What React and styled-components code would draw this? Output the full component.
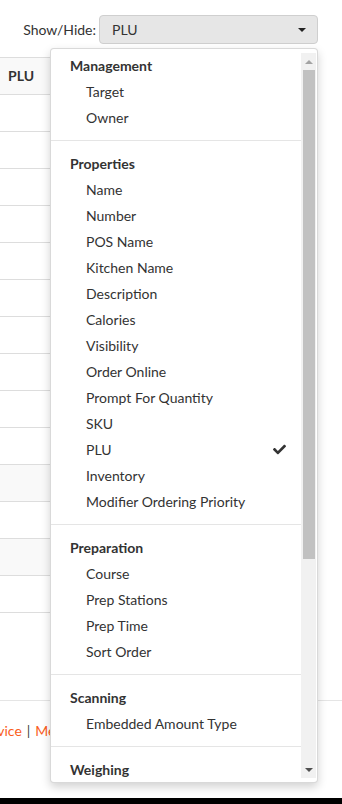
import React from 'react'
import styled, { createGlobalStyle } from 'styled-components'
import { FaCheck } from 'react-icons/fa'

const GlobalStyle = createGlobalStyle`
  html, body {
    margin: 0;
    padding: 0;
    background: #fff;
    overflow: hidden;
  }
  body {
    font-family: Lato, "Open Sans", Arial, sans-serif;
    font-size: 14px;
    color: #333;
  }
`

const groups = [
  { title: 'Management', items: ['Target', 'Owner'] },
  {
    title: 'Properties',
    items: [
      'Name', 'Number', 'POS Name', 'Kitchen Name', 'Description', 'Calories',
      'Visibility', 'Order Online', 'Prompt For Quantity', 'SKU', 'PLU',
      'Inventory', 'Modifier Ordering Priority'
    ]
  },
  { title: 'Preparation', items: ['Course', 'Prep Stations', 'Prep Time', 'Sort Order'] },
  { title: 'Scanning', items: ['Embedded Amount Type'] },
  { title: 'Weighing', items: ['Sold By Weight', 'Tare Weight'] }
]

const selected = 'PLU'
const stripedRows = [10, 12]

const App = () => {
  return (
    <App.Page>
      <GlobalStyle />
      <App.Toolbar>
        <App.Label>Show/Hide:</App.Label>
        <App.SelectWrap>
          <App.SelectBox>
            <span>PLU</span>
            <App.Caret />
          </App.SelectBox>
          <App.Menu>
            <App.MenuList>
              {groups.map((g, gi) => (
                <App.Group key={g.title} first={gi === 0}>
                  <App.GroupTitle>{g.title}</App.GroupTitle>
                  {g.items.map((item) => (
                    <App.Option key={item}>
                      <span>{item}</span>
                      {item === selected && <FaCheck size={13} />}
                    </App.Option>
                  ))}
                </App.Group>
              ))}
            </App.MenuList>
            <App.Scrollbar>
              <App.ScrollButton dir="up" />
              <App.Thumb />
              <App.Track />
              <App.ScrollButton dir="down" />
            </App.Scrollbar>
          </App.Menu>
        </App.SelectWrap>
      </App.Toolbar>

      <App.Table>
        <App.HeadRow>PLU</App.HeadRow>
        {Array.from({ length: 14 }).map((_, i) => (
          <App.Row key={i} striped={stripedRows.includes(i)} />
        ))}
      </App.Table>

      <App.Footer>
        <App.Links>
          <a>Terms of Service</a>
          <App.Sep>|</App.Sep>
          <a>Merchant Agreement</a>
        </App.Links>
      </App.Footer>
      <App.BottomBar />
    </App.Page>
  )
}

App.Page = styled.div`
  width: 342px;
  height: 804px;
  display: flex;
  flex-direction: column;
  overflow: hidden;
`

App.Toolbar = styled.div`
  display: flex;
  justify-content: flex-end;
  align-items: center;
  gap: 3px;
  padding: 15px 24px 13px 0;
  position: relative;
  z-index: 2;
`

App.Label = styled.label`
  font-size: 14px;
  color: #333;
`

App.SelectWrap = styled.div`
  position: relative;
`

App.SelectBox = styled.div`
  box-sizing: border-box;
  width: 219px;
  height: 29px;
  display: flex;
  align-items: center;
  justify-content: space-between;
  padding: 0 11px 0 12px;
  background: #e6e6e6;
  border: 1px solid #cfcfcf;
  border-radius: 4px;
  font-size: 14px;
  color: #333;
`

App.Caret = styled.span`
  width: 0;
  height: 0;
  border-left: 4px solid transparent;
  border-right: 4px solid transparent;
  border-top: 4px solid #222;
`

App.Menu = styled.div`
  position: absolute;
  top: 33px;
  right: 0;
  box-sizing: border-box;
  width: 268px;
  height: 735px;
  padding: 4px 1px 4px 0;
  display: flex;
  background: #fff;
  border: 1px solid rgba(0, 0, 0, 0.15);
  border-radius: 4px;
  box-shadow: 0 4px 10px rgba(0, 0, 0, 0.18);
`

App.MenuList = styled.div`
  flex: 1;
  min-width: 0;
  overflow: hidden;
`

App.Scrollbar = styled.div`
  width: 15px;
  display: flex;
  flex-direction: column;
  background: #f1f1f1;
`

App.ScrollButton = styled.div`
  height: 17px;
  display: flex;
  align-items: center;
  justify-content: center;

  &::before {
    content: '';
    width: 0;
    height: 0;
    border-left: 4px solid transparent;
    border-right: 4px solid transparent;
    ${(p) =>
      p.dir === 'up'
        ? 'border-bottom: 4px solid #a3a3a3;'
        : 'border-top: 4px solid #505050;'}
  }
`

App.Thumb = styled.div`
  height: 489px;
  margin: 0 1px 0 2px;
  background: #c1c1c1;
`

App.Track = styled.div`
  flex: 1;
`

App.Group = styled.div`
  padding: ${(p) => (p.first ? '0' : '10px')} 0 9px;
  border-top: ${(p) => (p.first ? 'none' : '1px solid #e5e5e5')};
`

App.GroupTitle = styled.div`
  height: 26px;
  line-height: 26px;
  padding-left: 19px;
  font-weight: 700;
  color: #333;
`

App.Option = styled.div`
  box-sizing: border-box;
  height: 26px;
  line-height: 20px;
  display: flex;
  align-items: center;
  justify-content: space-between;
  padding: 0 15px 1px 35px;
  color: #333;

  svg {
    color: #333;
  }
`

App.Table = styled.div`
  width: 300px;
  display: flex;
  flex-direction: column;
  border-bottom: 1px solid #ddd;
`

App.HeadRow = styled.div`
  height: 36px;
  line-height: 36px;
  padding-left: 8px;
  background: #f9f9f9;
  border-top: 1px solid #ddd;
  font-weight: 700;
`

App.Row = styled.div`
  height: 36px;
  border-top: 1px solid #ddd;
  background: ${(p) => (p.striped ? '#f9f9f9' : '#fff')};
`

App.Footer = styled.div`
  box-sizing: border-box;
  margin-top: 87px;
  height: 98px;
  border-top: 1px solid #e5e5e5;
  padding-top: 20px;
`

App.Links = styled.div`
  display: flex;
  white-space: nowrap;
  line-height: 20px;
  font-size: 14px;
  margin-left: -79px;

  a {
    color: #fa5d1c;
  }
`

App.Sep = styled.span`
  color: #444;
  padding: 0 5px;
`

App.BottomBar = styled.div`
  height: 6px;
  background: #000;
`

export default App
